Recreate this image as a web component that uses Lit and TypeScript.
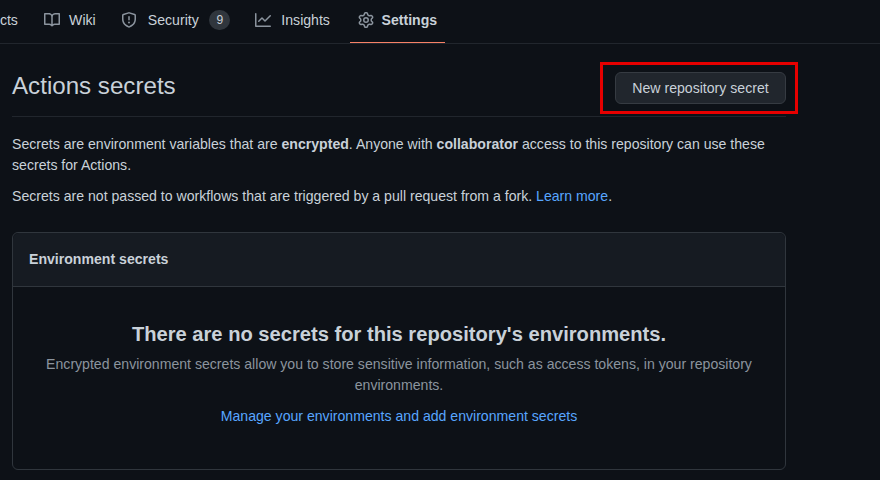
import { LitElement, html, css, svg } from "lit";
import { customElement } from "lit/decorators.js";

const icon = (d: string) => html`<svg class="ic" viewBox="0 0 16 16" width="16" height="16">${svg`<path fill-rule="evenodd" d=${d}></path>`}</svg>`;
const BOOK = "M0 1.75A.75.75 0 01.75 1h4.253c1.227 0 2.317.59 3 1.501A3.744 3.744 0 0111.006 1h4.245a.75.75 0 01.75.75v10.5a.75.75 0 01-.75.75h-4.507a2.25 2.25 0 00-1.591.659l-.622.621a.75.75 0 01-1.06 0l-.622-.621A2.25 2.25 0 005.258 13H.75a.75.75 0 01-.75-.75V1.75zm8.755 3a2.25 2.25 0 012.25-2.25H14.5v9h-3.757c-.71 0-1.4.201-1.992.572l.004-7.322zm-1.504 7.324l.004-5.073-.002-2.253A2.25 2.25 0 005.003 2.5H1.5v9h3.757a3.75 3.75 0 011.994.574z";
const SHIELD = "M7.467.133a1.75 1.75 0 011.066 0l5.25 1.68A1.75 1.75 0 0115 3.48V7c0 1.566-.32 3.182-1.303 4.682-.983 1.498-2.585 2.813-5.032 3.855a1.7 1.7 0 01-1.33 0c-2.447-1.042-4.049-2.357-5.032-3.855C1.32 10.182 1 8.566 1 7V3.48a1.75 1.75 0 011.217-1.667l5.25-1.68zm.61 1.429a.25.25 0 00-.153 0l-5.25 1.68a.25.25 0 00-.174.238V7c0 1.358.275 2.666 1.057 3.86.784 1.194 2.121 2.34 4.366 3.297a.2.2 0 00.154 0c2.245-.956 3.582-2.104 4.366-3.298C13.225 9.666 13.5 8.36 13.5 7V3.48a.25.25 0 00-.174-.237l-5.25-1.68zM9 10.5a1 1 0 11-2 0 1 1 0 012 0zm-.25-5.75a.75.75 0 10-1.5 0v3a.75.75 0 001.5 0v-3z";
const GRAPH = "M1.5 1.75a.75.75 0 00-1.5 0v12.5c0 .414.336.75.75.75h14.5a.75.75 0 000-1.5H1.5V1.75zm14.28 2.53a.75.75 0 00-1.06-1.06L10 7.94 7.53 5.47a.75.75 0 00-1.06 0L3.22 8.72a.75.75 0 001.06 1.06L7 7.06l2.47 2.47a.75.75 0 001.06 0l5.25-5.25z";
const GEAR = "M7.429 1.525a6.593 6.593 0 011.142 0c.036.003.108.036.137.146l.289 1.105c.147.56.55.967.997 1.189.174.086.341.183.501.29.417.278.97.423 1.53.27l1.102-.303c.11-.03.175.016.195.046.219.31.41.641.573.989.014.031.022.11-.059.19l-.815.806c-.411.406-.562.957-.53 1.456a4.588 4.588 0 010 .582c-.032.499.119 1.05.53 1.456l.815.806c.08.08.073.159.059.19a6.494 6.494 0 01-.573.99c-.02.029-.086.074-.195.045l-1.103-.303c-.559-.153-1.112-.008-1.529.27-.16.107-.327.204-.5.29-.449.222-.851.628-.998 1.189l-.289 1.105c-.029.11-.101.143-.137.146a6.613 6.613 0 01-1.142 0c-.036-.003-.108-.037-.137-.146l-.289-1.105c-.147-.56-.55-.967-.997-1.189a4.502 4.502 0 01-.501-.29c-.417-.278-.97-.423-1.53-.27l-1.102.303c-.11.03-.175-.016-.195-.046a6.492 6.492 0 01-.573-.989c-.014-.031-.022-.11.059-.19l.815-.806c.411-.406.562-.957.53-1.456a4.587 4.587 0 010-.582c.032-.499-.119-1.05-.53-1.456l-.815-.806c-.08-.08-.073-.159-.059-.19a6.44 6.44 0 01.573-.99c.02-.029.086-.075.195-.045l1.103.303c.559.153 1.112.008 1.529-.27.16-.107.327-.204.5-.29.449-.222.851-.628.998-1.189l.289-1.105c.029-.11.101-.143.137-.146zM8 0c-.236 0-.47.01-.701.03-.743.065-1.29.615-1.458 1.261l-.29 1.106c-.017.066-.078.158-.211.224a5.994 5.994 0 00-.668.386c-.123.082-.233.09-.3.071L3.27 2.776c-.644-.177-1.392.02-1.82.63a7.977 7.977 0 00-.704 1.217c-.315.675-.111 1.422.363 1.891l.815.806c.05.048.098.147.088.294a6.084 6.084 0 000 .772c.01.147-.038.246-.088.294l-.815.806c-.474.469-.678 1.216-.363 1.891.2.428.436.835.704 1.218.428.609 1.176.806 1.82.63l1.103-.303c.066-.019.176-.011.299.071.213.143.436.272.668.386.133.066.194.158.212.224l.289 1.106c.169.646.715 1.196 1.458 1.26a8.094 8.094 0 001.402 0c.743-.064 1.29-.614 1.458-1.26l.29-1.106c.017-.066.078-.158.211-.224a5.98 5.98 0 00.668-.386c.123-.082.233-.09.3-.071l1.102.302c.644.177 1.392-.02 1.82-.63.268-.382.505-.789.704-1.217.315-.675.111-1.422-.364-1.891l-.814-.806c-.05-.048-.098-.147-.088-.294a6.1 6.1 0 000-.772c-.01-.147.039-.246.088-.294l.814-.806c.475-.469.679-1.216.364-1.891a7.992 7.992 0 00-.704-1.218c-.428-.609-1.176-.806-1.82-.63l-1.103.303c-.066.019-.176.011-.299-.071a5.991 5.991 0 00-.668-.386c-.133-.066-.194-.158-.212-.224L10.16 1.29C9.99.645 9.444.095 8.701.031A8.094 8.094 0 008 0zm1.5 8a1.5 1.5 0 11-3 0 1.5 1.5 0 013 0zM11 8a3 3 0 11-6 0 3 3 0 016 0z";

@customElement("app-root")
export class AppRoot extends LitElement {
  static styles = css`
    :host { display: block; width: 880px; height: 480px; overflow: hidden; position: relative; background: #0d1117; color: #c9d1d9; font-family: "Liberation Sans", Arial, sans-serif; font-size: 14.1px; line-height: 21px; }
    nav { display: flex; height: 44px; box-sizing: border-box; border-bottom: 1px solid #21262d; overflow: hidden; gap: 9px; }
    .tab { display: flex; align-items: center; gap: 10px; height: 44px; padding: 0 8px; box-sizing: border-box; border-bottom: 2px solid transparent; flex: none; color: #c9d1d9; }
    .tab.first { margin-left: -41px; }
    .tab.wiki { gap: 8.7px; margin-left: 1.5px; }
    .tab.sec { margin-left: 0.5px; gap: 10.6px; }
    .tab.cur { gap: 8px; margin-left: 2.6px; font-weight: bold; border-bottom-color: #f78166; }
    .lbl, .ic, .count { position: relative; top: -1px; }
    .ic { fill: #8b949e; flex: none; }
    .count { display: inline-block; min-width: 21px; box-sizing: border-box; padding: 0 6px; border-radius: 10px; background: #30363d; font-size: 12.1px; line-height: 20px; text-align: center; }
    main { width: 774px; margin-left: 12px; }
    .head { display: flex; align-items: flex-end; justify-content: space-between; height: 73px; padding-bottom: 12px; box-sizing: border-box; border-bottom: 1px solid #21262d; }
    h2 { margin: 0; font-size: 24.15px; font-weight: 400; line-height: 36px; }
    .btn { font: inherit; line-height: 20px; color: #c9d1d9; background: #21262d; border: 1px solid #363b42; border-radius: 6px; padding: 0; width: 171px; height: 32px; box-sizing: border-box; white-space: nowrap; }
    p { margin: 0; }
    .p1 { margin-top: 17px; }
    .p2 { margin-top: 10px; }
    a { color: #58a6ff; text-decoration: none; }
    .box { margin-top: 25px; border: 1px solid #30363d; border-radius: 6px; height: 238px; box-sizing: border-box; }
    .box-h { height: 54px; box-sizing: border-box; background: #161b22; border-bottom: 1px solid #30363d; border-radius: 6px 6px 0 0; padding: 0 16px; display: flex; align-items: center; font-weight: bold; }
    .blank { text-align: center; padding: 32px 24px 0; }
    h3 { margin: 0; font-size: 20.15px; line-height: 30px; font-weight: bold; }
    .sub { color: #8b949e; margin-top: 5px; }
    .manage { margin-top: 10px; }
    .mark { position: absolute; left: 600px; top: 62px; width: 198px; height: 52px; box-sizing: border-box; border: 3px solid #e60000; pointer-events: none; }
  `;
  render() {
    return html`
      <nav>
        <div class="tab first"><span class="lbl">Projects</span></div>
        <div class="tab wiki">${icon(BOOK)}<span class="lbl">Wiki</span></div>
        <div class="tab sec">${icon(SHIELD)}<span class="lbl">Security</span><span class="count">9</span></div>
        <div class="tab">${icon(GRAPH)}<span class="lbl">Insights</span></div>
        <div class="tab cur">${icon(GEAR)}<span class="lbl">Settings</span></div>
      </nav>
      <main>
        <div class="head"><h2>Actions secrets</h2><button class="btn">New repository secret</button></div>
        <p class="p1">Secrets are environment variables that are <b>encrypted</b>. Anyone with <b>collaborator</b> access to this repository can use these secrets for Actions.</p>
        <p class="p2">Secrets are not passed to workflows that are triggered by a pull request from a fork. <a>Learn more</a>.</p>
        <section class="box">
          <div class="box-h">Environment secrets</div>
          <div class="blank">
            <h3>There are no secrets for this repository's environments.</h3>
            <p class="sub">Encrypted environment secrets allow you to store sensitive information, such as access tokens, in your repository environments.</p>
            <p class="manage"><a>Manage your environments and add environment secrets</a></p>
          </div>
        </section>
      </main>
      <div class="mark"></div>
    `;
  }
}
